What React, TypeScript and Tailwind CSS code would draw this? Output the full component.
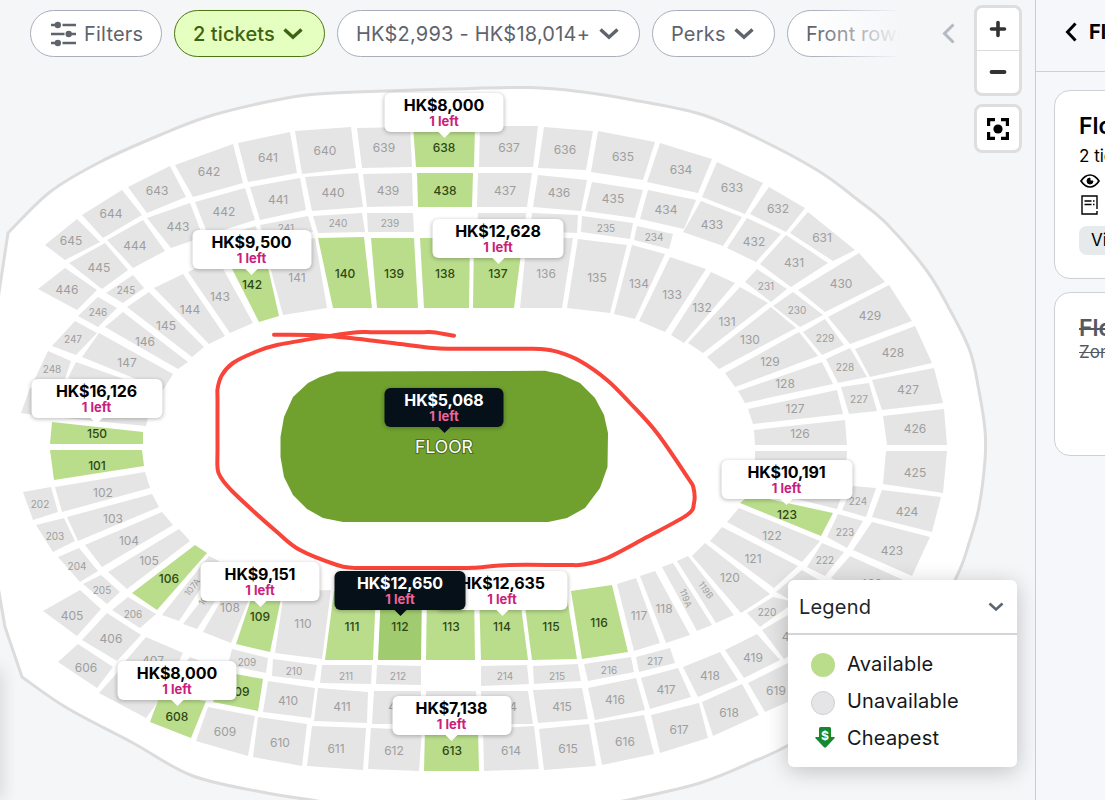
import type { ReactNode } from "react";

type Kind = "na" | "open" | "hover";

interface Section {
  label: string;
  points: string;
  x: number;
  y: number;
  kind?: Kind;
  rotate?: number;
}

const s = (
  label: string,
  points: string,
  x = 0,
  y = 0,
  kind: Kind = "na",
  rotate = 0,
): Section => ({ label, points, x, y, kind, rotate });

const sections: Section[] = [
  // 600 level, top
  s("645", "45,245 77,219 100,242 65,260", 71, 240),
  s("644", "82,215 122,190 142,215 103,238", 111, 213),
  s("643", "128,187 170,166 186,197 147,213", 157, 190),
  s("642", "175,165 233,144 243,183 193,197", 209, 171),
  s("641", "238,143 290,132 297,173 248,182", 268, 157),
  s("640", "295,131 351,127 356,168 302,174", 325, 150),
  s("639", "357,128 410,127 412,167 362,168", 384, 147),
  s("638", "413,126 475,126 474,167 416,167", 444, 147, "open"),
  s("637", "480,126 538,126 533,167 479,167", 509, 147),
  s("636", "544,127 593,131 586,170 538,168", 565, 149),
  s("635", "598,131 655,142 643,180 591,172", 623, 156),
  s("634", "660,143 712,159 698,193 647,182", 681, 169),
  s("633", "717,162 763,183 745,214 702,197", 732, 187),
  s("632", "769,187 805,208 786,232 750,214", 778, 208),
  s("631", "808,212 855,250 833,261 790,233", 822, 237),
  // 400 level, top and right
  s("446", "38,289 65,268 97,290 77,310", 67, 289),
  s("445", "69,263 105,243 128,270 102,289", 99, 267),
  s("444", "107,240 143,220 165,251 133,268", 135, 245),
  s("443", "147,218 190,203 203,237 171,248", 178, 226),
  s("442", "195,202 245,188 255,220 208,235", 224, 211),
  s("441", "250,187 300,178 306,210 260,220", 278, 199),
  s("440", "305,177 358,173 363,207 312,211", 333, 192),
  s("439", "363,174 412,173 413,206 367,207", 388, 190),
  s("438", "417,173 473,173 472,207 418,207", 445, 190, "open"),
  s("437", "478,173 532,173 527,207 477,207", 505, 190),
  s("436", "538,175 587,180 581,211 533,207", 559, 192),
  s("435", "592,182 643,190 635,218 585,211", 613, 198),
  s("434", "648,190 696,200 684,229 640,219", 666, 209),
  s("433", "701,201 742,217 723,246 683,232", 712, 224),
  s("432", "747,218 781,234 756,262 727,248", 754, 241),
  s("431", "786,235 828,263 791,287 760,264", 794, 262),
  s("430", "859,253 885,282 825,312 798,290", 841, 283),
  s("429", "889,285 912,321 850,344 828,317", 870, 315),
  s("428", "915,326 932,363 870,377 855,349", 893, 352),
  s("427", "872,380 934,368 943,403 882,410", 908, 389),
  s("426", "883,416 944,409 947,445 887,445", 915, 428),
  s("425", "886,451 947,451 943,493 883,484", 915, 472),
  s("424", "882,490 941,497 932,532 872,517", 907, 511),
  s("423", "872,522 930,537 912,576 853,550", 892, 550),
  s("422", "850,556 910,583 895,610 831,578", 871, 583),
  s("420", "762,630 800,608 825,635 784,659", 793, 636),
  s("419", "725,650 757,634 780,660 744,678", 753, 657),
  s("418", "683,667 720,652 738,680 698,697", 710, 675),
  s("417", "641,678 678,668 691,697 650,709", 666, 689),
  s("416", "588,688 636,678 645,710 595,720", 615, 699),
  s("415", "533,690 582,688 588,719 538,723", 562, 706),
  s("414", "481,691 528,691 533,724 482,724", 507, 706),
  s("", "426,691 476,691 478,724 425,724"),
  s("412", "374,691 421,691 421,724 372,724", 398, 706),
  s("411", "318,688 368,692 367,723 314,721", 342, 706),
  s("410", "268,681 315,688 311,718 263,712", 288, 700),
  s("409", "225,672 263,679 258,711 213,702", 238, 691, "open"),
  s("", "190,657 228,672 218,700 172,680"),
  s("407", "146,637 183,653 170,680 122,665", 153, 660),
  s("406", "107,613 141,635 117,661 82,640", 111, 638),
  s("405", "43,611 80,590 101,609 77,636", 72, 615),
  // 600 level, bottom
  s("606", "78,644 113,667 97,688 58,662", 86, 667),
  s("", "118,672 165,692 146,718 99,693"),
  s("608", "160,695 206,701 191,738 150,722", 177, 716, "open"),
  s("609", "208,707 255,716 248,756 196,741", 225, 731),
  s("610", "258,717 307,724 302,766 253,757", 280, 742),
  s("611", "312,726 366,728 363,770 307,766", 336, 748),
  s("612", "371,728 422,730 419,771 368,769", 394, 750),
  s("613", "425,728 478,728 479,771 424,771", 452, 750, "open"),
  s("614", "483,729 534,726 539,769 484,771", 511, 750),
  s("615", "539,729 589,724 596,766 544,770", 568, 748),
  s("616", "594,723 644,715 654,754 602,765", 625, 741),
  s("617", "651,715 699,703 708,738 660,753", 679, 729),
  s("618", "702,702 742,684 759,715 713,736", 729, 712),
  s("619", "748,683 790,662 815,690 765,712", 776, 690),
  // 200 level
  s("", "30,388 60,388 55,418 21,413"),
  s("248", "48,351 71,361 63,385 32,385", 52, 369),
  s("247", "75,321 97,333 76,355 52,346", 73, 339),
  s("246", "98,297 117,308 98,327 78,316", 98, 312),
  s("245", "133,275 144,288 123,303 106,293", 126, 290),
  s("", "213,238 256,226 260,245 222,255"),
  s("241", "260,225 308,216 313,232 265,242", 286, 228),
  s("240", "313,216 362,213 365,232 318,233", 338, 223),
  s("239", "367,213 413,213 414,232 368,232", 390, 223),
  s("", "478,213 526,213 525,232 477,232"),
  s("", "532,213 578,215 577,233 530,231"),
  s("235", "582,216 633,223 630,239 581,232", 606, 228),
  s("234", "637,226 673,234 669,249 634,240", 654, 237),
  s("231", "757,269 787,289 771,302 745,282", 766, 286),
  s("230", "793,292 823,315 800,327 773,306", 797, 310),
  s("229", "825,319 844,345 822,355 803,332", 825, 338),
  s("228", "850,348 867,377 838,383 826,359", 845, 367),
  s("227", "841,387 869,383 877,411 849,414", 859, 399),
  s("224", "853,486 876,488 866,517 842,510", 858, 501),
  s("223", "838,514 863,521 847,548 827,537", 845, 532),
  s("222", "822,543 844,552 825,576 807,567", 825, 560),
  s("", "776,592 802,570 822,582 800,605"),
  s("220", "747,613 773,597 795,602 760,627", 767, 612),
  s("217", "636,657 670,648 675,663 639,672", 655, 661),
  s("216", "584,664 631,657 634,672 588,681", 609, 670),
  s("215", "533,666 578,664 581,681 534,684", 557, 676),
  s("214", "481,666 527,665 529,684 481,686", 505, 676),
  s("212", "377,665 421,666 421,685 376,684", 398, 676),
  s("211", "322,665 372,665 371,684 320,683", 346, 676),
  s("210", "273,659 317,665 314,681 272,676", 294, 671),
  s("209", "232,649 268,658 266,673 228,665", 247, 662),
  s("206", "128,597 156,614 140,628 112,610", 133, 614),
  s("205", "101,575 120,592 107,604 83,584", 102, 590),
  s("204", "58,557 79,548 98,571 80,582", 77, 566),
  s("203", "36,525 64,518 75,541 53,552", 55, 536),
  s("202", "23,492 51,487 58,512 33,520", 40, 504),
  // 100 level
  s("", "55,402 150,410 146,426 53,417"),
  s("", "76,362 163,393 156,407 68,378"),
  s("147", "82,357 99,333 173,374 163,390", 127, 362),
  s("146", "105,327 123,312 188,362 178,369", 145, 341),
  s("145", "127,307 149,292 204,347 192,357", 166, 325),
  s("144", "154,288 183,274 225,336 209,344", 190, 309),
  s("143", "188,272 217,258 253,323 230,333", 220, 296),
  s("142", "226,257 264,250 279,316 259,322", 252, 284.5, "open"),
  s("141", "265,248 315,238 327,308 283,315", 297, 277),
  s("140", "318,238 364,237 372,308 333,308", 345, 273, "open"),
  s("139", "371,238 414,238 418,308 377,308", 394, 273, "open"),
  s("138", "420,238 470,238 469,308 424,308", 445, 273, "open"),
  s("137", "474,238 523,238 514,308 473,308", 498, 273, "open"),
  s("136", "527,238 573,238 562,308 520,308", 546, 273),
  s("135", "578,239 627,245 610,313 567,308", 597, 277),
  s("134", "632,245 665,254 635,319 614,314", 639, 283),
  s("133", "670,257 706,269 665,332 639,321", 672, 294),
  s("132", "711,272 735,283 684,343 671,335", 702, 307),
  s("131", "740,287 768,303 703,353 688,343", 727, 321),
  s("130", "771,307 796,328 719,369 707,357", 750, 339),
  s("129", "799,332 818,356 735,387 725,373", 770, 361),
  s("128", "822,362 833,384 745,403 738,391", 785, 383),
  s("127", "748,409 837,390 843,414 753,424", 795, 408),
  s("126", "754,430 845,420 847,445 755,445", 800, 433.5),
  s("", "755,451 847,451 846,472 755,464"),
  s("", "752,474 843,492 837,509 748,487"),
  s("123", "740,503 750,495 833,513 821,536", 787, 514.5, "open"),
  s("122", "739,508 820,541 802,562 727,522", 772, 535.5),
  s("121", "722,527 798,566 774,588 710,541", 753, 558.5),
  s("120", "705,543 770,594 741,613 692,556", 730, 577),
  s("119B", "677,561 688,556 734,615 716,623", 706, 590, "na", 55),
  s("119A", "662,567 673,563 712,625 697,631", 686, 598, "na", 68),
  s("118", "640,576 655,571 690,635 666,643", 664, 608),
  s("117", "617,584 636,578 660,643 634,651", 639, 615.5),
  s("116", "571,591 612,585 628,652 582,659", 599, 622, "open"),
  s("115", "523,591 566,591 577,659 532,660", 551, 626, "open"),
  s("114", "479,591 519,591 528,660 481,660", 502, 626, "open"),
  s("113", "427,591 474,591 475,660 426,660", 451, 626, "open"),
  s("112", "381,591 422,591 421,660 378,660", 400, 626, "hover"),
  s("111", "334,591 376,591 373,660 325,660", 352, 626, "open"),
  s("110", "284,592 331,590 322,659 275,653", 303, 623),
  s("109", "254,590 282,594 270,652 236,644", 260, 616, "open"),
  s("108", "230,585 252,592 231,643 203,632", 230, 607),
  s("107B", "225,570 232,575 197,629 183,624", 206, 596, "na", -56),
  s("107A", "209,556 219,561 179,621 162,615", 192, 587, "na", -52),
  s("106", "195,545 207,553 157,610 132,593", 169, 578, "open"),
  s("105", "108,572 179,529 190,541 127,589", 149, 560),
  s("104", "85,545 162,512 173,525 102,567", 129, 540.5),
  s("103", "67,517 152,494 159,507 78,541", 113, 518.5),
  s("102", "55,487 145,472 150,488 62,512", 103, 492),
  s("101", "50,450 142,450 144,466 54,480", 97, 465.5, "open"),
  s("150", "52,422 143,432 143,444 50,444", 97, 433.5, "open"),
];

const fills: Record<Kind, string> = {
  na: "fill-[#e5e5e5]",
  open: "fill-[#b9dd8b]",
  hover: "fill-[#a0cb6e]",
};

const textSize = (label: string) => {
  if (label.length > 3) return "text-[9px] fill-[#9e9e9e]";
  if (label.startsWith("2")) return "text-[10px] fill-[#9e9e9e]";
  return "text-[12px] fill-[#9e9e9e]";
};

type Point = [number, number];

// Catmull-Rom through every point, as cubic segments
const curve = (pts: Point[]) =>
  pts
    .slice(1)
    .map((p, i) => {
      const prev = pts[Math.max(i - 1, 0)];
      const from = pts[i];
      const next = pts[Math.min(i + 2, pts.length - 1)];
      const c1 = [from[0] + (p[0] - prev[0]) / 6, from[1] + (p[1] - prev[1]) / 6];
      const c2 = [p[0] - (next[0] - from[0]) / 6, p[1] - (next[1] - from[1]) / 6];
      return `C${c1.join(" ")} ${c2.join(" ")} ${p.join(" ")}`;
    })
    .join("");

const outerWall: Point[] = [
  [8, 233], [50, 192], [100, 162], [160, 135], [213, 115], [287, 98],
  [333, 93], [370, 91.5], [450, 89], [530, 87.5], [583, 92], [633, 100],
  [700, 114], [753, 136], [817, 170], [858, 200], [887, 224], [927, 271],
  [950, 310], [970, 351], [979, 391], [985, 430], [985, 460], [979, 507],
  [970, 540], [955, 580], [910, 655], [850, 710], [787, 746], [757, 760],
  [700, 783], [623, 801], [560, 812], [470, 818], [380, 812], [317, 801],
  [267, 793], [193, 776], [133, 743], [67, 708], [22, 677],
];

const marker: Point[] = [
  [274, 334.7], [313, 335], [350, 338], [400, 344], [433, 348], [455, 348.7],
  [520, 348.7], [540, 348.9], [557, 351.7], [580, 361], [607, 380],
  [630, 403], [657, 433], [688, 478], [693.5, 488], [694, 503], [687, 515],
  [647, 537], [607, 558], [583, 564.5], [565, 565], [510, 565], [473, 567.7],
  [450, 568], [365, 568], [352, 567.7], [337, 565], [300, 550], [277, 532],
  [233, 492], [220, 476], [217.5, 467], [217.5, 450], [217.5, 400],
  [217.7, 388], [222, 375], [233, 363], [253, 353], [277, 345], [330, 336],
  [357, 332.3], [375, 332.3], [420, 332.3], [433, 332.3], [454, 335.7],
];

interface Pin {
  price: string;
  x: number;
  y: number;
  wide?: boolean;
  dark?: boolean;
}

const pins: Pin[] = [
  { price: "HK$8,000", x: 444, y: 93 },
  { price: "HK$9,500", x: 251.5, y: 230 },
  { price: "HK$12,628", x: 498, y: 219, wide: true },
  { price: "HK$16,126", x: 96.5, y: 379, wide: true },
  { price: "HK$10,191", x: 786.5, y: 460, wide: true },
  { price: "HK$9,151", x: 260, y: 562 },
  { price: "HK$12,635", x: 502, y: 571, wide: true },
  { price: "HK$12,650", x: 400, y: 571, wide: true, dark: true },
  { price: "HK$8,000", x: 177, y: 661 },
  { price: "HK$7,138", x: 451.5, y: 696 },
  { price: "HK$5,068", x: 444, y: 388, dark: true },
];

const PricePin = ({ price, x, y, wide, dark }: Pin) => (
  <div
    className={`absolute flex h-[39px] -translate-x-1/2 flex-col items-center rounded-md pt-[3px] shadow-[0_1px_4px_rgba(0,0,0,0.28)] ${
      wide ? "w-[131px]" : "w-[119px]"
    } ${dark ? "bg-[#061018] text-white" : "bg-white text-black"}`}
    style={{ left: x, top: y }}
  >
    <span className="text-[16px] leading-[18px] font-bold tracking-[-0.1px] whitespace-nowrap">
      {price}
    </span>
    <span
      className={`text-[13px] leading-[15px] font-bold ${
        dark ? "text-[#f0649f]" : "text-[#c9207b]"
      }`}
    >
      1 left
    </span>
    <svg
      className={`absolute -bottom-[6px] h-[7px] w-[14px] ${dark ? "fill-[#061018]" : "fill-white"}`}
      viewBox="0 0 14 7"
    >
      <path d="M0 0h14L7 7z" />
    </svg>
  </div>
);

const Chevron = ({ className = "" }: { className?: string }) => (
  <svg
    className={`h-[12px] w-[20px] shrink-0 ${className}`}
    viewBox="0 0 20 12"
    fill="none"
    stroke="currentColor"
    strokeWidth="3.4"
  >
    <path d="M1.5 1.5 10 9.3l8.5-7.8" />
  </svg>
);

const Pill = ({
  className = "",
  children,
}: {
  className?: string;
  children: ReactNode;
}) => (
  <div
    className={`flex h-[47px] shrink-0 items-center rounded-full border text-[20px] whitespace-nowrap ${className}`}
  >
    {children}
  </div>
);

const idle = "border-[#a9aebb] bg-white text-[#5f646c]";

const FilterBar = () => (
  <div className="absolute top-[10px] left-[30px] flex w-[871px] gap-[12px] overflow-hidden">
    <Pill className={`w-[132px] gap-[8px] pl-[20px] tracking-[0.2px] ${idle}`}>
      <svg className="h-[26px] w-[25px] fill-current" viewBox="0 0 25 26">
        <path
          d="M0 4h8M11.500 4H25M0 13h13.500M17 13h8M0 22h8M11.500 22H25"
          stroke="currentColor"
          strokeWidth="2.300"
        />
        <circle cx="6.800" cy="4" r="3.200" />
        <circle cx="17.700" cy="13" r="3.200" />
        <circle cx="6.800" cy="22" r="3.200" />
      </svg>
      Filters
    </Pill>
    <Pill className="w-[151px] gap-[8px] border-[#4d7510] bg-[#e4ffbf] pl-[18px] font-medium tracking-[0.1px] text-[#3f6212]">
      2 tickets
      <Chevron />
    </Pill>
    <Pill className={`w-[303px] gap-[9px] pl-[18px] tracking-[0.22px] ${idle}`}>
      HK$2,993 - HK$18,014+
      <Chevron />
    </Pill>
    <Pill className={`w-[123px] gap-[8px] pl-[18px] tracking-[0.2px] ${idle}`}>
      Perks
      <Chevron />
    </Pill>
    <Pill className={`w-[150px] pl-[18px] tracking-[0.1px] ${idle}`}>Front rows</Pill>
    <div className="absolute top-0 right-0 h-full w-[90px] bg-gradient-to-r from-[#f5f6f8]/0 to-[#f5f6f8]" />
  </div>
);

const MapControls = () => (
  <div className="absolute top-[5px] right-[13px] flex flex-col gap-[9px]">
    <div className="flex w-[48px] flex-col divide-y divide-[#dcdcdc] rounded-lg border-3 border-[#dedede] bg-white">
      <button className="flex h-[43px] items-center justify-center">
        <svg className="h-5 w-5" viewBox="0 0 20 20" fill="none" stroke="#333" strokeWidth="3.6" strokeLinecap="round">
          <path d="M10 3.500v13M3.500 10h13" />
        </svg>
      </button>
      <button className="flex h-[42px] items-center justify-center">
        <svg className="h-5 w-5" viewBox="0 0 20 20" fill="none" stroke="#333" strokeWidth="3.8" strokeLinecap="round">
          <path d="M3.500 10h13" />
        </svg>
      </button>
    </div>
    <button className="-mt-px flex h-[49px] w-[48px] items-center justify-center rounded-lg border-3 border-[#dedede] bg-white">
      <svg className="h-[22px] w-[22px]" viewBox="0 0 22 22" fill="none" stroke="#000" strokeWidth="3.2">
        <path d="M1.600 8V1.600H8M14 1.600h6.400V8M20.400 14v6.400H14M8 20.400H1.600V14" />
        <circle cx="11" cy="11" r="4.600" fill="#000" stroke="none" />
      </svg>
    </button>
  </div>
);

const Legend = () => (
  <div className="absolute right-[18px] bottom-[33px] w-[229px] rounded-md bg-white text-[20px] shadow-[0_4px_22px_rgba(0,0,0,0.22)]">
    <div className="flex h-[55px] items-center justify-between border-b-2 border-[#d3d5d8] pr-[13px] pl-[11px] text-[#22262b]">
      <span className="pt-px tracking-[0.2px]">Legend</span>
      <svg className="h-[10px] w-[16px]" viewBox="0 0 16 10" fill="none" stroke="#5b6675" strokeWidth="2.6">
        <path d="M1.500 1.500 8 7.500l6.500-6" />
      </svg>
    </div>
    <ul className="flex h-[132px] flex-col pt-[10px] pl-[23px] tracking-[0.2px] text-[#15181b]">
      <li className="flex h-[37px] items-center gap-[12px]">
        <span className="mt-[2px] h-[24px] w-[24px] rounded-full bg-[#b9dd8b]" />
        Available
      </li>
      <li className="flex h-[37px] items-center gap-[12px]">
        <span className="mt-[5px] h-[24px] w-[24px] rounded-full border border-[#cfd1d6] bg-[#e5e5e7]" />
        Unavailable
      </li>
      <li className="flex h-[37px] items-center gap-[12px]">
        <svg className="ml-[4px] h-[21px] w-[20px]" viewBox="0 0 20 21">
          <path d="M4 1.500Q4 0 5.500 0h9Q16 0 16 1.500V10h3q1.300.4.3 1.600L11 20.300q-1 .9-2 0L.7 11.600Q-.3 10.400 1 10h3z" fill="#16892d" />
          <text x="10" y="13" textAnchor="middle" className="fill-white text-[12px] font-bold">
            $
          </text>
        </svg>
        Cheapest
      </li>
    </ul>
  </div>
);

const SeatMap = () => (
  <svg className="block h-[800px] w-[1035px]" viewBox="0 0 1035 800">
    <path
      d={`M-4 312 8 233${curve(outerWall)}L5 627 -4 575z`}
      className="fill-white stroke-[#dcdcdc]"
      strokeWidth="3"
      strokeLinejoin="round"
    />
    {sections.map(({ label, points, kind = "na" }) => (
      <polygon key={points} id={label ? `s${label}` : undefined} points={points} className={fills[kind]} />
    ))}
    {sections
      .filter(({ label }) => label)
      .map(({ label, x, y, kind, rotate }) => (
        <text
          key={label}
          x={x}
          y={y}
          textAnchor="middle"
          dominantBaseline="central"
          transform={rotate ? `rotate(${rotate} ${x} ${y})` : undefined}
          className={kind === "na" ? textSize(label) : "fill-[#2f4712] text-[12px] font-medium"}
        >
          {label}
        </text>
      ))}
    <polygon
      points="337,371.500 545,370.800 560,374 580,383 595,398 604,415 608,433 607.500,467 600,488 585,508 567,518 548,522 343,522 323,518 307,509 293,495 284,477 280.500,457 280.500,437 284,417 293,397 308,383 320,377"
      className="fill-[#70a12f]"
    />
    <text
      x="444"
      y="446"
      textAnchor="middle"
      dominantBaseline="central"
      className="fill-white stroke-[#4b6d20] text-[17.5px] [paint-order:stroke]"
      strokeWidth="2"
    >
      FLOOR
    </text>
    <path
      d={`M${marker[0].join(" ")}${curve(marker)}`}
      fill="none"
      className="stroke-[#f9443a]"
      strokeWidth="4"
      strokeLinecap="round"
    />
  </svg>
);

const TicketPanel = () => (
  <aside className="h-full w-[70px] shrink-0 overflow-hidden border-l border-[#c9cdd2] bg-[#f6f7fa] whitespace-nowrap text-black">
    <header className="flex h-[72px] items-center gap-[12px] border-b border-[#ccd1d6] pb-[7px] pl-[29px] text-[20px] font-bold">
      <svg className="h-[20px] w-[12px] shrink-0" viewBox="0 0 12 20" fill="none" stroke="#000" strokeWidth="3">
        <path d="M10.500 1.500 2.500 10l8 8.500" />
      </svg>
      Floor
    </header>
    <div className="flex w-[320px] flex-col gap-[13px] pt-[18px] pl-[18px]">
      <article className="h-[189px] rounded-[16px] border border-[#ccd1d6] bg-white pt-[20px] pl-[24px]">
        <h3 className="text-[23px] leading-[30px] font-semibold">Floor</h3>
        <p className="text-[17px] leading-[30px]">2 tickets</p>
        <svg className="mt-[2px] ml-px h-[16px] w-[20px]" viewBox="0 0 20 16" fill="none" stroke="#000" strokeWidth="1.700">
          <path d="M1 8Q5 2 10 2t9 6q-4 6-9 6T1 8z" />
          <path d="M10 5a3 3 0 1 0 3 3h-3z" fill="#000" strokeWidth="1" />
        </svg>
        <svg className="mt-[6px] ml-[2px] h-[20px] w-[17px]" viewBox="0 0 17 20" fill="none" stroke="#000" strokeWidth="1.400">
          <path d="M16 14V1H1v18h15v-3M3.500 6h7M3.500 9.500h7M12 6h1.500M12 9.500h1.500" />
        </svg>
        <span className="mt-[11px] flex h-[29px] w-[120px] items-center rounded-lg bg-[#e6eaeb] pl-[12px] text-[17px]">
          View
        </span>
      </article>
      <article className="h-[164px] rounded-[16px] border border-[#ccd1d6] bg-white pt-[22px] pl-[24px] text-[#555a60] line-through">
        <h3 className="text-[23px] leading-[26px] font-semibold">Floor</h3>
        <p className="text-[17px] leading-[22px]">Zone</p>
      </article>
    </div>
  </aside>
);

export default function App() {
  return (
    <div className="flex h-[800px] w-[1105px] overflow-hidden bg-[#f5f6f8] font-[Inter,sans-serif]">
      <main className="relative w-[1035px] shrink-0 overflow-hidden">
        <SeatMap />
        {pins.map((pin) => (
          <PricePin key={`${pin.price}-${pin.x}`} {...pin} />
        ))}
        <FilterBar />
        <svg
          className="absolute top-[23px] left-[942px] h-[21px] w-[13px]"
          viewBox="0 0 13 21"
          fill="none"
          stroke="#b3bac2"
          strokeWidth="3"
        >
          <path d="M11.500 1.500 2.500 10.500l9 9" />
        </svg>
        <MapControls />
        <Legend />
        <div className="absolute bottom-0 -left-[10px] h-[130px] w-[10px] shadow-[0_0_18px_rgba(0,0,0,0.2)]" />
      </main>
      <TicketPanel />
    </div>
  );
}
